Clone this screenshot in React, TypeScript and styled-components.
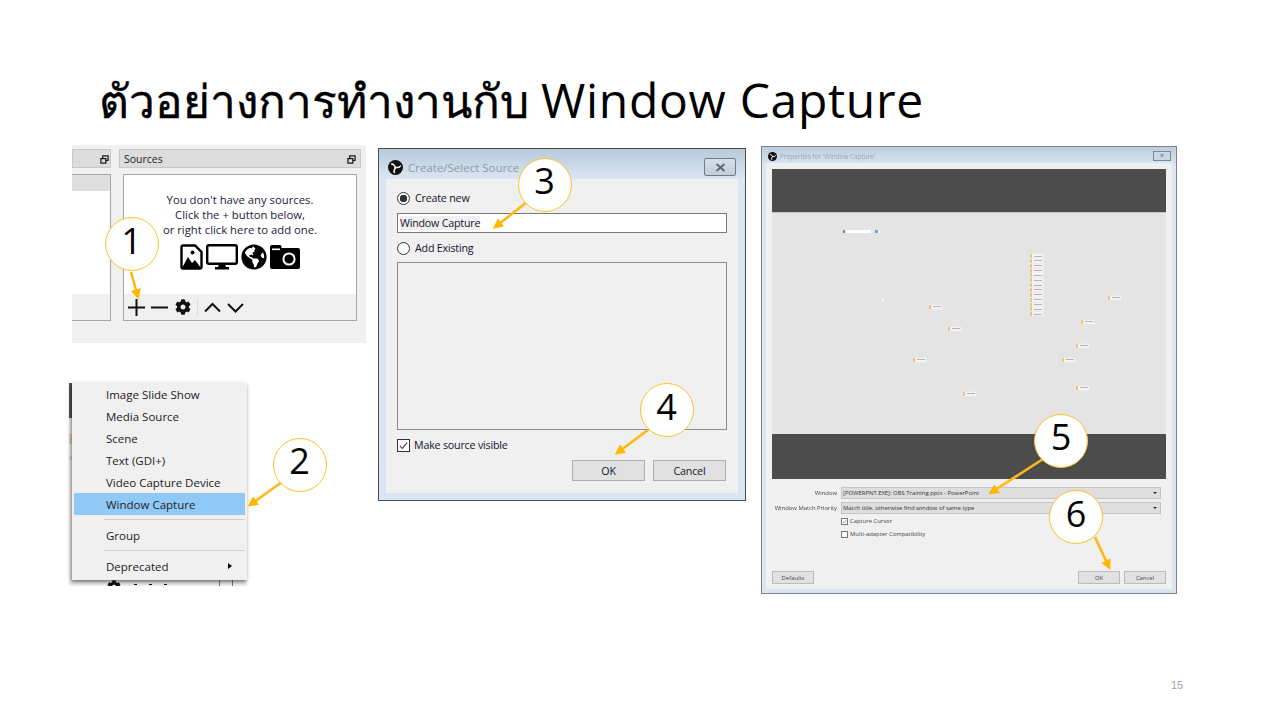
import React from "react";
import styled, { createGlobalStyle } from "styled-components";
import { FaCog, FaGlobeAmericas } from "react-icons/fa";

const Global = createGlobalStyle`
  html, body { margin: 0; padding: 0; background: #fff; }
  body { font-family: "Open Sans", "Noto Sans", sans-serif; overflow: hidden; }
`;

const Slide = styled.div`
  position: relative;
  width: 1280px;
  height: 720px;
  background: #fff;
  overflow: hidden;
`;
const Title = styled.h1`
  margin: 0;
  padding: 65px 0 0 99px;
  font-family: "Open Sans", "Noto Sans", "DejaVu Sans", sans-serif;
  font-weight: 400;
  font-size: 46px;
  line-height: 70px;
  color: #000;
  white-space: nowrap;
`;
const ThaiPart = styled.span`
  font-family: "Liberation Sans", "Noto Sans", sans-serif;
  -webkit-text-stroke: 0.4px #000;
`;
const LatinPart = styled.span`
  font-size: 48px;
  letter-spacing: 0.7px;
`;
const PageNo = styled.div`
  position: absolute;
  left: 1171px;
  top: 678px;
  font: 11px/14px "Liberation Sans", sans-serif;
  color: #a3a3a3;
`;

/* screenshot 1 */
const ObsShot = styled.div`
  position: absolute;
  left: 72px;
  top: 145px;
  width: 294px;
  height: 198px;
  background: #f0f0f0;
  display: flex;
  gap: 8px;
  padding-top: 4px;
  box-sizing: border-box;
`;
const Dock = styled.div<{ $w: number }>`
  width: ${(p) => p.$w}px;
  display: flex;
  flex-direction: column;
  gap: 6px;
`;
const DockHead = styled.div<{ $pr: number }>`
  height: 19px;
  box-sizing: border-box;
  background: #dcdcdc;
  border: 1px solid #c8c8c8;
  display: flex;
  align-items: center;
  justify-content: space-between;
  padding: 1px ${(p) => p.$pr}px 0 4px;
  font-size: 10.5px;
  color: #222;
`;
const DockBox = styled.div<{ $left?: boolean }>`
  height: 147px;
  box-sizing: border-box;
  background: #fff;
  border: 1px solid #a0a7ad;
  ${(p) => (p.$left ? "border-left: 0; margin-right: 0;" : "margin: 0 4px;")}
  display: flex;
  flex-direction: column;
`;
const ListHead = styled.div`
  height: 16px;
  background: #dedede;
`;
const BoxBody = styled.div`
  flex: 1;
  display: flex;
  flex-direction: column;
  align-items: center;
  padding-top: 17px;
`;
const EmptyText = styled.div`
  font-size: 11.3px;
  line-height: 15px;
  color: #24203a;
  text-align: center;
  white-space: nowrap;
`;
const IconRow = styled.div`
  display: flex;
  align-items: center;
  gap: 3px;
  margin-top: 7px;
`;
const BoxFoot = styled.div`
  height: 26px;
  background: #f0f0f0;
  display: flex;
  align-items: center;
  padding-left: 4px;
  gap: 6px;
`;
const GearWrap = styled.span`
  margin-left: 1px;
  line-height: 0;
`;
const ToolSep = styled.span`
  width: 1px;
  height: 18px;
  background: #dcdcdc;
`;

/* screenshot 2 */
const MenuShot = styled.div`
  position: absolute;
  left: 69px;
  top: 383px;
  width: 178px;
  height: 203px;
`;
const MenuStrip = styled.div`
  position: absolute;
  left: 0;
  top: 0;
  width: 3px;
  height: 203px;
  background: linear-gradient(#555 0 17%, #f4f4f4 17% 25%, #e8d8b8 25% 30%, #f4f4f4 30% 36%, #ddd 36% 38%, #f4f4f4 38% 100%);
`;
const MenuFooter = styled.div`
  position: absolute;
  left: 0;
  bottom: 0;
  width: 178px;
  height: 8px;
  background: #f0f0f0;
  overflow: hidden;
  display: flex;
  align-items: flex-end;
`;
const FootGear = styled.span`
  margin: 0 0 -8px 38px;
  line-height: 0;
`;
const FootDots = styled.span`
  margin: 0 0 1px 13px;
  width: 34px;
  height: 1px;
  background: repeating-linear-gradient(90deg, #111 0 3px, transparent 3px 15px);
`;
const FootRule = styled.span<{ $ml: number }>`
  margin-left: ${(p) => p.$ml}px;
  width: 1px;
  height: 6px;
  background: #777;
`;
const Menu = styled.div`
  position: absolute;
  left: 3px;
  top: 0;
  width: 175px;
  height: 197px;
  box-sizing: border-box;
  background: #f0f0f0;
  padding: 0 2px;
  box-shadow: -1px 2px 4px rgba(0, 0, 0, 0.55);
  display: flex;
  flex-direction: column;
`;
const MenuItem = styled.div<{ $active?: boolean }>`
  height: 22px;
  flex: none;
  display: flex;
  align-items: center;
  justify-content: space-between;
  padding: 0 13px 0 32px;
  font-size: 11.5px;
  color: #222;
  background: ${(p) => (p.$active ? "#90c8f6" : "transparent")};
`;
const MenuSep = styled.div`
  height: 1px;
  flex: none;
  margin: 4px 0 4px 30px;
  background: #d0d0d0;
`;
const SubArrow = styled.span`
  width: 0;
  height: 0;
  border-left: 4px solid #000;
  border-top: 3.5px solid transparent;
  border-bottom: 3.5px solid transparent;
`;

/* dialog */
const Dialog = styled.div`
  position: absolute;
  left: 378px;
  top: 148px;
  width: 368px;
  height: 353px;
  box-sizing: border-box;
  border: 1px solid #4c4c4c;
  background: linear-gradient(#b8cadb 0, #dae6f2 30px, #d9e5f2 100%);
  display: flex;
  flex-direction: column;
  padding: 0 7px 7px;
`;
const TitleBar = styled.div`
  height: 30px;
  box-sizing: border-box;
  flex: none;
  display: flex;
  align-items: center;
  gap: 5px;
  padding: 7px 2px 0 2px;
  font-size: 11.5px;
  color: #8e9aa5;
`;
const CloseBtn = styled.div`
  margin-left: auto;
  margin-top: -1px;
  width: 32px;
  height: 18px;
  border: 1px solid #6d7a88;
  border-radius: 2px;
  box-sizing: border-box;
  background: linear-gradient(#d6e0ea, #c0ced9);
  display: flex;
  align-items: center;
  justify-content: center;
`;
const DialogBody = styled.div`
  flex: 1;
  background: #f0f0f0;
  padding: 10px 11px 12px;
  display: flex;
  flex-direction: column;
  font-size: 10.7px;
  letter-spacing: -0.2px;
  color: #14142a;
`;
const OptionRow = styled.label`
  display: flex;
  align-items: center;
  gap: 5px;
  height: 18px;
`;
const Radio = styled.span<{ $on?: boolean }>`
  width: 13px;
  height: 13px;
  box-sizing: border-box;
  flex: none;
  border-radius: 50%;
  border: 1px solid #333;
  background: ${(p) => (p.$on ? "radial-gradient(circle, #333 0 3.5px, #fff 4px)" : "#fff")};
`;
const TextInput = styled.div`
  height: 20px;
  margin: 6px 0 6px;
  box-sizing: border-box;
  background: #fff;
  border: 1px solid #7a7a7a;
  padding-left: 2px;
  display: flex;
  align-items: center;
`;
const Sel = styled.span`
  background: #f0f0f0;
`;
const ListFrame = styled.div`
  height: 168px;
  margin-top: 5px;
  box-sizing: border-box;
  border: 1px solid #8a8a8a;
`;
const CheckRow = styled.div<{ $mt: number }>`
  display: flex;
  align-items: center;
  gap: 4px;
  height: 14px;
  margin-top: ${(p) => p.$mt}px;
`;
const CheckBox = styled.span`
  width: 13px;
  height: 13px;
  flex: none;
  box-sizing: border-box;
  background: #fff;
  border: 1px solid #333;
  display: flex;
`;
const Buttons = styled.div`
  display: flex;
  justify-content: flex-end;
  gap: 8px;
  margin-top: 8px;
  padding-right: 1px;
`;
const DlgButton = styled.div`
  width: 73px;
  height: 21px;
  box-sizing: border-box;
  background: #e1e1e1;
  border: 1px solid #adadad;
  display: flex;
  align-items: center;
  justify-content: center;
`;

/* properties */
const Props = styled.div`
  position: absolute;
  left: 761px;
  top: 146px;
  width: 416px;
  height: 448px;
  box-sizing: border-box;
  border: 1px solid #7c8288;
  background: linear-gradient(#bccddd 0, #dae6f2 18px, #d9e5f2 100%);
  display: flex;
  flex-direction: column;
  padding: 0 4px 4px;
  font-size: 5.9px;
  color: #444;
`;
const PropsTitle = styled.div`
  height: 16px;
  flex: none;
  box-sizing: border-box;
  display: flex;
  align-items: center;
  gap: 3px;
  padding: 2px 0 0 2px;
  font-size: 6.4px;
  color: #9aa5af;
  filter: blur(0.25px);
`;
const PropsClose = styled.div`
  margin-left: auto;
  margin-right: 1px;
  width: 18px;
  height: 10px;
  border: 1px solid #7b8894;
  box-sizing: border-box;
  background: #ccd7e1;
  font-size: 7px;
  line-height: 8px;
  text-align: center;
  color: #555;
`;
const PropsBody = styled.div`
  flex: 1;
  background: #f0f0f0;
  padding: 6px 6px 5px;
  display: flex;
  flex-direction: column;
`;
const DarkBand = styled.div<{ $h: number }>`
  height: ${(p) => p.$h}px;
  flex: none;
  background: #4c4c4c;
`;
const Preview = styled.div`
  position: relative;
  height: 222px;
  flex: none;
  background: #e4e4e4;
  border-top: 1px solid #c4c4c4;
  box-sizing: border-box;
`;
const Chip = styled.div<{ $x: number; $y: number }>`
  position: absolute;
  left: ${(p) => p.$x}px;
  top: ${(p) => p.$y}px;
  width: 13px;
  height: 4px;
  background: linear-gradient(#b4b4b4, #b4b4b4) center / 8px 1px no-repeat, #f3f3f3;
  border-left: 2px solid #ebc37e;
  box-shadow: 0 0 0 0.5px #ececec;
  box-sizing: border-box;
`;
const TinyMark = styled.div`
  position: absolute;
  left: 109px;
  top: 85px;
  width: 4px;
  height: 5px;
  background: #f3f3f3;
  border: 1px solid #dfe6ee;
  box-sizing: border-box;
`;
const Slider = styled.div`
  position: absolute;
  left: 71px;
  top: 17px;
  width: 38px;
  height: 3px;
  display: flex;
  align-items: center;
  gap: 1px;
`;
const SliderTick = styled.span`
  width: 2px;
  height: 3px;
  background: #888;
`;
const SliderBar = styled.span`
  width: 25px;
  height: 3px;
  background: #fff;
`;
const SliderDot = styled.span`
  width: 3px;
  height: 3px;
  margin-left: 3px;
  background: #6fa8dc;
  box-shadow: 2px 0 0 #fff;
`;
const FormRow = styled.div<{ $mt: number }>`
  display: grid;
  grid-template-columns: 65px 320px;
  column-gap: 4px;
  align-items: center;
  margin-top: ${(p) => p.$mt}px;
`;
const FormLabel = styled.div`
  text-align: right;
  white-space: nowrap;
  filter: blur(0.2px);
`;
const Combo = styled.div`
  height: 12px;
  box-sizing: border-box;
  background: #dedede;
  border: 1px solid #c4c4c4;
  display: flex;
  align-items: center;
  justify-content: space-between;
  padding: 0 3px 0 1px;
  color: #333;
  white-space: nowrap;
`;
const Caret = styled.span`
  width: 0;
  height: 0;
  border-top: 2.5px solid #222;
  border-left: 2.5px solid transparent;
  border-right: 2.5px solid transparent;
`;
const SmallCheck = styled.div<{ $mt: number }>`
  display: flex;
  align-items: center;
  gap: 2px;
  height: 8px;
  margin: ${(p) => p.$mt}px 0 0 69px;
  white-space: nowrap;
`;
const SmallBox = styled.span`
  width: 7px;
  height: 7px;
  box-sizing: border-box;
  flex: none;
  border: 1px solid #777;
  background: #fff;
  display: flex;
`;
const PropsButtons = styled.div`
  display: flex;
  margin-top: auto;
  gap: 4px;
`;
const PropsBtn = styled.div<{ $push?: boolean }>`
  width: 42px;
  height: 13px;
  box-sizing: border-box;
  background: #e1e1e1;
  border: 1px solid #bbb;
  display: flex;
  align-items: center;
  justify-content: center;
  ${(p) => (p.$push ? "margin-left: auto;" : "")}
`;

/* callouts */
const Bubble = styled.div<{ $x: number; $y: number }>`
  position: absolute;
  left: ${(p) => p.$x - 27}px;
  top: ${(p) => p.$y - 27}px;
  width: 54px;
  height: 54px;
  box-sizing: border-box;
  border-radius: 50%;
  border: 1px solid #fcc22c;
  background: #fff;
  padding-bottom: 7px;
  display: flex;
  align-items: center;
  justify-content: center;
  font: 36px/1 "Open Sans", "Noto Sans", sans-serif;
  color: #000;
`;
const Overlay = styled.svg`
  position: absolute;
  left: 0;
  top: 0;
  pointer-events: none;
`;

const ObsLogo = ({ s }: { s: number }) => (
  <svg width={s} height={s} viewBox="0 0 24 24">
    <circle cx="12" cy="12" r="12" fill="#111" />
    <g fill="none" stroke="#fff" strokeWidth="2.4" strokeLinecap="round">
      {[0, 120, 240].map((a) => (
        <path key={a} d="M12 12C10 10 10 6 6 6.5" transform={`rotate(${a} 12 12)`} />
      ))}
    </g>
  </svg>
);
const Restore = () => (
  <svg width="9" height="9" viewBox="0 0 10 10" fill="none" stroke="#111" strokeWidth="1.3">
    <rect x="3" y="1" width="6" height="5" />
    <rect x="1" y="4" width="5.5" height="5" fill="#dcdcdc" />
  </svg>
);
const Tick = ({ s }: { s: number }) => (
  <svg width="100%" height="100%" viewBox="0 0 12 12" fill="none" stroke="#444" strokeWidth={s}>
    <path d="M2 6.5 4.8 9.2 10 2.8" />
  </svg>
);
const ImageIcon = () => (
  <svg width="23" height="26" viewBox="0 0 23 26">
    <path d="M3 1.5h12l6.5 6.5v15a1.5 1.5 0 0 1-1.5 1.5H3A1.5 1.5 0 0 1 1.5 23V3A1.5 1.5 0 0 1 3 1.5Z" fill="#fff" stroke="#000" strokeWidth="2.4" />
    <circle cx="12.5" cy="8.5" r="2" fill="#000" />
    <path d="M2 24 8 13l4 6 3-3 6 8Z" fill="#000" />
  </svg>
);
const MonitorIcon = () => (
  <svg width="32" height="26" viewBox="0 0 32 26">
    <rect x="1.2" y="1.2" width="29.6" height="18.6" rx="1.8" fill="#fff" stroke="#000" strokeWidth="2.4" />
    <path d="M13 20h6l1 3h3v2.4H9V23h3Z" fill="#000" />
  </svg>
);
const CameraIcon = () => (
  <svg width="30" height="24" viewBox="0 0 30 24">
    <path d="M2 0h8a1.5 1.5 0 0 1 1.5 1.5V3H28a2 2 0 0 1 2 2v17a2 2 0 0 1-2 2H2a2 2 0 0 1-2-2V2a2 2 0 0 1 2-2Z" fill="#000" />
    <rect x="2" y="3.5" width="8" height="1.6" fill="#fff" />
    <circle cx="19" cy="14" r="5.6" fill="none" stroke="#fff" strokeWidth="2" />
  </svg>
);
const Tool = ({ d }: { d: string }) => (
  <svg width="17" height="17" viewBox="0 0 17 17" fill="none" stroke="#111" strokeWidth="2">
    <path d={d} />
  </svg>
);

const chips: [number, number][] = [
  ...Array.from({ length: 13 }, (_, i): [number, number] => [258, 41 + i * 4.85]),
  [336, 82.5], [157, 91.5], [176, 113.5], [309, 106.5], [304, 130.5], [141, 144.5],
  [290, 144.5], [304, 172.5], [191, 178.5],
];

const arrows: [number, number, number, number][] = [
  [131, 272, 136.5, 292],
  [282, 482, 254, 502],
  [527, 202, 499, 224],
  [648, 430, 621, 450],
  [1043, 459, 995, 490],
  [1095, 537, 1107, 563],
];
const bubbles: [number, number, string][] = [
  [131.5, 244, "1"],
  [299.5, 464.5, "2"],
  [544.5, 184.5, "3"],
  [666.5, 410, "4"],
  [1061, 440.5, "5"],
  [1076, 517, "6"],
];

export default function App() {
  return (
    <Slide>
      <Global />
      <Title>
        <ThaiPart>ตัวอย่างการทำงานกับ</ThaiPart> <LatinPart>Window Capture</LatinPart>
      </Title>

      <ObsShot>
        <Dock $w={39}>
          <DockHead $pr={1}>
            <span />
            <Restore />
          </DockHead>
          <DockBox $left>
            <ListHead />
            <BoxBody />
            <BoxFoot />
          </DockBox>
        </Dock>
        <Dock $w={242}>
          <DockHead $pr={4}>
            <span>Sources</span>
            <Restore />
          </DockHead>
          <DockBox>
            <BoxBody>
              <EmptyText>
                You don't have any sources.
                <br />
                Click the + button below,
                <br />
                or right click here to add one.
              </EmptyText>
              <IconRow>
                <ImageIcon />
                <MonitorIcon />
                <FaGlobeAmericas size={26} color="#000" />
                <CameraIcon />
              </IconRow>
            </BoxBody>
            <BoxFoot>
              <Tool d="M8.5 0v17M0 8.5h17" />
              <Tool d="M0 8.5h17" />
              <GearWrap>
                <FaCog size={16} color="#111" />
              </GearWrap>
              <ToolSep />
              <Tool d="M1 12.5 8.5 5l7.5 7.5" />
              <Tool d="M1 5l7.5 7.5L16 5" />
            </BoxFoot>
          </DockBox>
        </Dock>
      </ObsShot>

      <MenuShot>
        <MenuStrip />
        <MenuFooter>
          <FootGear>
            <FaCog size={14} color="#111" />
          </FootGear>
          <FootDots />
          <FootRule $ml={51} />
          <FootRule $ml={12} />
        </MenuFooter>
        <Menu>
          <MenuItem>Image Slide Show</MenuItem>
          <MenuItem>Media Source</MenuItem>
          <MenuItem>Scene</MenuItem>
          <MenuItem>Text (GDI+)</MenuItem>
          <MenuItem>Video Capture Device</MenuItem>
          <MenuItem $active>Window Capture</MenuItem>
          <MenuSep />
          <MenuItem>Group</MenuItem>
          <MenuSep />
          <MenuItem>
            Deprecated
            <SubArrow />
          </MenuItem>
        </Menu>
      </MenuShot>

      <Dialog>
        <TitleBar>
          <ObsLogo s={15} />
          Create/Select Source
          <CloseBtn>
            <svg width="11" height="9" viewBox="0 0 11 9" stroke="#666" strokeWidth="2">
              <path d="M1.5 1 9.5 8M9.5 1 1.5 8" />
            </svg>
          </CloseBtn>
        </TitleBar>
        <DialogBody>
          <OptionRow>
            <Radio $on />
            Create new
          </OptionRow>
          <TextInput>
            <Sel>Window Capture</Sel>
          </TextInput>
          <OptionRow>
            <Radio />
            Add Existing
          </OptionRow>
          <ListFrame />
          <CheckRow $mt={8}>
            <CheckBox>
              <Tick s={1.2} />
            </CheckBox>
            Make source visible
          </CheckRow>
          <Buttons>
            <DlgButton>OK</DlgButton>
            <DlgButton>Cancel</DlgButton>
          </Buttons>
        </DialogBody>
      </Dialog>

      <Props>
        <PropsTitle>
          <ObsLogo s={9} />
          Properties for 'Window Capture'
          <PropsClose>×</PropsClose>
        </PropsTitle>
        <PropsBody>
          <DarkBand $h={43} />
          <Preview>
            <Slider>
              <SliderTick />
              <SliderBar />
              <SliderDot />
            </Slider>
            <TinyMark />
            {chips.map(([x, y], i) => (
              <Chip key={i} $x={x} $y={y} />
            ))}
          </Preview>
          <DarkBand $h={45} />
          <FormRow $mt={8}>
            <FormLabel>Window</FormLabel>
            <Combo>
              [POWERPNT.EXE]: OBS Training.pptx - PowerPoint
              <Caret />
            </Combo>
          </FormRow>
          <FormRow $mt={3}>
            <FormLabel>Window Match Priority</FormLabel>
            <Combo>
              Match title, otherwise find window of same type
              <Caret />
            </Combo>
          </FormRow>
          <SmallCheck $mt={3}>
            <SmallBox>
              <Tick s={1.4} />
            </SmallBox>
            Capture Cursor
          </SmallCheck>
          <SmallCheck $mt={5}>
            <SmallBox />
            Multi-adapter Compatibility
          </SmallCheck>
          <PropsButtons>
            <PropsBtn>Defaults</PropsBtn>
            <PropsBtn $push>OK</PropsBtn>
            <PropsBtn>Cancel</PropsBtn>
          </PropsButtons>
        </PropsBody>
      </Props>

      <Overlay width="1280" height="720" viewBox="0 0 1280 720">
        <defs>
          <marker id="head" markerWidth="4" markerHeight="4" refX="1" refY="2" orient="auto" markerUnits="strokeWidth">
            <path d="M0 0 4 2 0 4Z" fill="#ffb700" />
          </marker>
        </defs>
        {arrows.map(([x1, y1, x2, y2], i) => (
          <line key={i} x1={x1} y1={y1} x2={x2} y2={y2} stroke="#fdb813" strokeWidth="2.6" markerEnd="url(#head)" />
        ))}
      </Overlay>

      {bubbles.map(([x, y, n]) => (
        <Bubble key={n} $x={x} $y={y}>
          {n}
        </Bubble>
      ))}

      <PageNo>15</PageNo>
    </Slide>
  );
}
